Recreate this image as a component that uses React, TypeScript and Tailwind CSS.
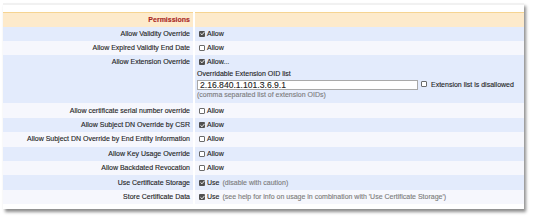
const FONT = "font-['Liberation_Sans',Arial,sans-serif]";

function Check({ checked }: { checked?: boolean }) {
  if (checked) {
    return (
      <span className="inline-flex h-[6px] w-[6px] shrink-0 items-center justify-center rounded-[1px] bg-[#505050]">
        <svg width="5" height="5" viewBox="0 0 10 10" fill="none">
          <path d="M1.5 5.2 L4 7.6 L8.6 2.2" stroke="#fff" strokeWidth="1.8" strokeLinecap="round" strokeLinejoin="round" />
        </svg>
      </span>
    );
  }
  return <span className="inline-block h-[6px] w-[6px] shrink-0 rounded-[1px] border-[0.7px] border-[#6b6b6b] bg-white" />;
}

type Row = {
  label: string;
  checked?: boolean;
  word?: string;
  note?: string;
};

const TOP_ROWS: Row[] = [
  { label: "Allow Validity Override", checked: true },
  { label: "Allow Expired Validity End Date" },
];

const BOTTOM_ROWS: Row[] = [
  { label: "Allow certificate serial number override" },
  { label: "Allow Subject DN Override by CSR", checked: true },
  { label: "Allow Subject DN Override by End Entity Information" },
  { label: "Allow Key Usage Override" },
  { label: "Allow Backdated Revocation" },
  { label: "Use Certificate Storage", checked: true, word: "Use", note: "(disable with caution)" },
  {
    label: "Store Certificate Data",
    checked: true,
    word: "Use",
    note: "(see help for info on usage in combination with 'Use Certificate Storage')",
  },
];

function rowBg(i: number) {
  return i % 2 === 0 ? "bg-[#e3ebfc]" : "bg-[#f6f7fd]";
}

function SimpleRow({ row, bg }: { row: Row; bg: string }) {
  return (
    <div className="grid h-[14.4px] grid-cols-[190px_1fr] gap-x-[2px]">
      <div className={`${bg} flex items-center justify-end pr-[3px]`}>{row.label}</div>
      <div className={`${bg} flex items-center gap-[2px] pl-[4px]`}>
        <Check checked={row.checked} />
        <span>{row.word ?? "Allow"}</span>
        {row.note && <span className="ml-[1px] text-[#7c7c7c]">{row.note}</span>}
      </div>
    </div>
  );
}

export default function App() {
  return (
    <div
      className={`${FONT} h-[218px] w-[534px] bg-white pl-[3px] pt-[3px] text-[7px] leading-[10px] text-[#1e1e1e] [-webkit-text-stroke:0.12px]`}
    >
      <div className="w-[521px] border-t-2 border-[#f1f1f1] bg-white pb-[5px] pt-[7px] shadow-[2px_3px_3px_rgba(0,0,0,0.45)]">
        {/* Header */}
        <div className="grid h-[14.7px] grid-cols-[190px_1fr] gap-x-[2px]">
          <div className="flex items-center justify-end border-t-[1.5px] border-[#f6d491] bg-[#fdeacb] pr-[3px] font-bold text-[#a8261f]">
            Permissions
          </div>
          <div className="border-t-[1.5px] border-[#f6d491] bg-[#fdeacb]" />
        </div>

        {TOP_ROWS.map((r, i) => (
          <SimpleRow key={r.label} row={r} bg={rowBg(i)} />
        ))}

        {/* Extension override */}
        <div className="grid h-[48px] grid-cols-[190px_1fr] gap-x-[2px]">
          <div className="flex justify-end bg-[#e3ebfc] pr-[3px] pt-[1.5px]">Allow Extension Override</div>
          <div className="flex flex-col bg-[#e3ebfc] pl-[2px] pt-[1.5px]">
            <div className="flex items-center gap-[2px] pl-[2px]">
              <Check checked />
              <span>Allow...</span>
            </div>
            <div className="mt-[2px]">Overridable Extension OID list</div>
            <div className="mt-[1px] flex items-center">
              <div className="flex h-[10px] w-[221px] items-center border-[0.8px] border-[#a9a9a9] bg-white pl-[2px] text-[8.6px] text-[#222]">
                2.16.840.1.101.3.6.9.1
              </div>
              <span className="ml-[3px] mr-[4px]">
                <Check />
              </span>
              <span>Extension list is disallowed</span>
            </div>
            <div className="text-[#7c7c7c]">(comma separated list of extension OIDs)</div>
          </div>
        </div>

        {BOTTOM_ROWS.map((r, i) => (
          <SimpleRow key={r.label} row={r} bg={rowBg(i + 1)} />
        ))}
      </div>
    </div>
  );
}
